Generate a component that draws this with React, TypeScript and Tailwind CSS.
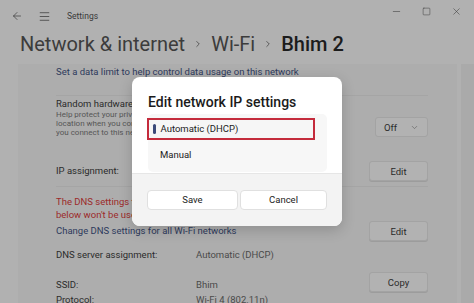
import { ArrowLeft, ChevronDown, ChevronRight, Menu, Minus, Square, X } from 'lucide-react';

const font = "font-['Roboto','Noto_Sans',sans-serif]";

function Btn({ label, className = '' }: { label: string; className?: string }) {
  return (
    <div className={`flex h-[20px] w-[59px] shrink-0 items-center justify-center rounded-[3px] border border-[#a3a3a3] bg-[#b2b2b2] text-[9.5px] text-[#2a2a2a] shadow-[0_1px_0_#9c9c9c] ${className}`}>
      {label}
    </div>
  );
}

export default function App() {
  return (
    <div className={`relative h-[303px] w-[474px] overflow-hidden bg-[#b1b1b1] ${font}`}>
      {/* title bar */}
      <div className="flex h-[32px] items-center pl-[11px] text-[#3a3a3a]">
        <ArrowLeft className="h-[12px] w-[12px]" strokeWidth={1.4} />
        <Menu className="ml-[15px] h-[13px] w-[13px]" strokeWidth={1.4} />
        <span className="ml-[16px] text-[8.5px]">Settings</span>
        <div className="-mt-[10px] ml-auto flex items-center gap-[20px] pr-[12px]">
          <Minus className="h-[11px] w-[11px]" strokeWidth={1.2} />
          <Square className="h-[9px] w-[9px]" strokeWidth={1.3} />
          <X className="h-[11px] w-[11px]" strokeWidth={1.2} />
        </div>
      </div>

      {/* breadcrumb */}
      <div className="flex h-[24px] items-center pl-[20px] text-[20px] leading-none">
        <span className="text-[#3c3c3c]">Network &amp; internet</span>
        <ChevronRight className="mx-[8px] h-[10px] w-[10px] text-[#3c3c3c]" strokeWidth={1.8} />
        <span className="text-[#3c3c3c]">Wi-Fi</span>
        <ChevronRight className="mx-[8px] h-[10px] w-[10px] text-[#3c3c3c]" strokeWidth={1.8} />
        <span className="font-medium text-[#1c1c1c]">Bhim 2</span>
      </div>

      {/* content */}
      <div className="mt-[8px] flex">
        <div className="ml-[18px] w-[439px] bg-[#adadad] pl-[38px] pr-[29px] text-[9.5px] leading-[13px] text-[#2b2b2b]">
          <div className="h-[32px] border-b border-[#a5a5a5] pt-[1px] text-[#2e3a5c]">
            Set a data limit to help control data usage on this network
          </div>

          <div className="flex h-[52px] items-start pt-[1px]">
            <div className="flex-1">
              <div>Random hardware addresses</div>
              <div className="text-[8px] leading-[9px] text-[#565656]">
                Help protect your privacy by making it harder for people to track your
                <br />
                location when you connect to this network. The setting takes effect the
                <br />
                you connect to this network.
              </div>
            </div>
            <div className="mt-[20px] flex h-[20px] w-[53px] items-center justify-between rounded-[3px] border border-[#a3a3a3] bg-[#b2b2b2] px-[8px] text-[9.5px]">
              Off
              <ChevronDown className="h-[9px] w-[9px] text-[#555]" strokeWidth={1.5} />
            </div>
          </div>

          <div className="flex h-[39px] items-start border-b border-[#a5a5a5] pt-[13px]">
            <span className="mt-[3px] flex-1">IP assignment:</span>
            <Btn label="Edit" />
          </div>

          <div className="flex h-[55px] items-start pt-[8px]">
            <div className="flex-1">
              <div className="text-[#9c2a2a]">
                The DNS settings that don't match the IP assignment
                <br />
                below won't be used
              </div>
              <div className="mt-[3px] text-[#2e3a5c]">Change DNS settings for all Wi-Fi networks</div>
            </div>
            <Btn label="Edit" className="mt-[26px]" />
          </div>

          <div className="flex h-[27px] pt-[6px]">
            <span className="w-[140px]">DNS server assignment:</span>
            <span className="text-[#4a4a4a]">Automatic (DHCP)</span>
          </div>

          <div className="flex h-[24px] items-start pt-[3px]">
            <span className="mt-[6px] w-[140px]">SSID:</span>
            <span className="mt-[6px] flex-1 text-[#4a4a4a]">Bhim</span>
            <Btn label="Copy" />
          </div>
          <div className="flex">
            <span className="w-[140px]">Protocol:</span>
            <span className="text-[#4a4a4a]">Wi-Fi 4 (802.11n)</span>
          </div>
        </div>
        <div className="ml-[4px] w-[13px] bg-[#aaaaaa]" />
      </div>

      {/* dialog */}
      <div className="absolute left-[132px] top-[77px] w-[210px] overflow-hidden rounded-[8px] bg-white shadow-[0_4px_14px_rgba(0,0,0,0.18)]">
        <div className="px-[16px] pt-[16px]">
          <div className="text-[14px] font-medium leading-[18px] text-[#1b1b1b]">Edit network IP settings</div>
          <div className="mr-[-1px] mt-[3px] h-[58px] rounded-[5px] bg-[#f7f7f7] pt-[4px]">
            <div className="-ml-[1px] mr-[12px] flex h-[22px] items-center border-2 border-[#c42b3c] bg-[#f6f6f6] pl-[4px] text-[9.5px] text-[#222]">
              <span className="mr-[5px] h-[10px] w-[2.5px] rounded-full bg-[#3b4a7a]" />
              Automatic (DHCP)
            </div>
            <div className="mt-[8px] pl-[12px] text-[9.5px] leading-[13px] text-[#222]">Manual</div>
          </div>
        </div>
        <div className="mt-[1px] flex gap-[2px] border-t border-[#e6e6e6] bg-[#f3f3f3] px-[15px] pb-[16px] pt-[16px]">
          <div className="flex h-[20px] w-[91px] items-center justify-center rounded-[4px] border border-[#e0e0e0] bg-white text-[9.5px] text-[#222]">Save</div>
          <div className="flex h-[20px] w-[87px] items-center justify-center rounded-[4px] border border-[#e0e0e0] bg-white text-[9.5px] text-[#222]">Cancel</div>
        </div>
      </div>
    </div>
  );
}
